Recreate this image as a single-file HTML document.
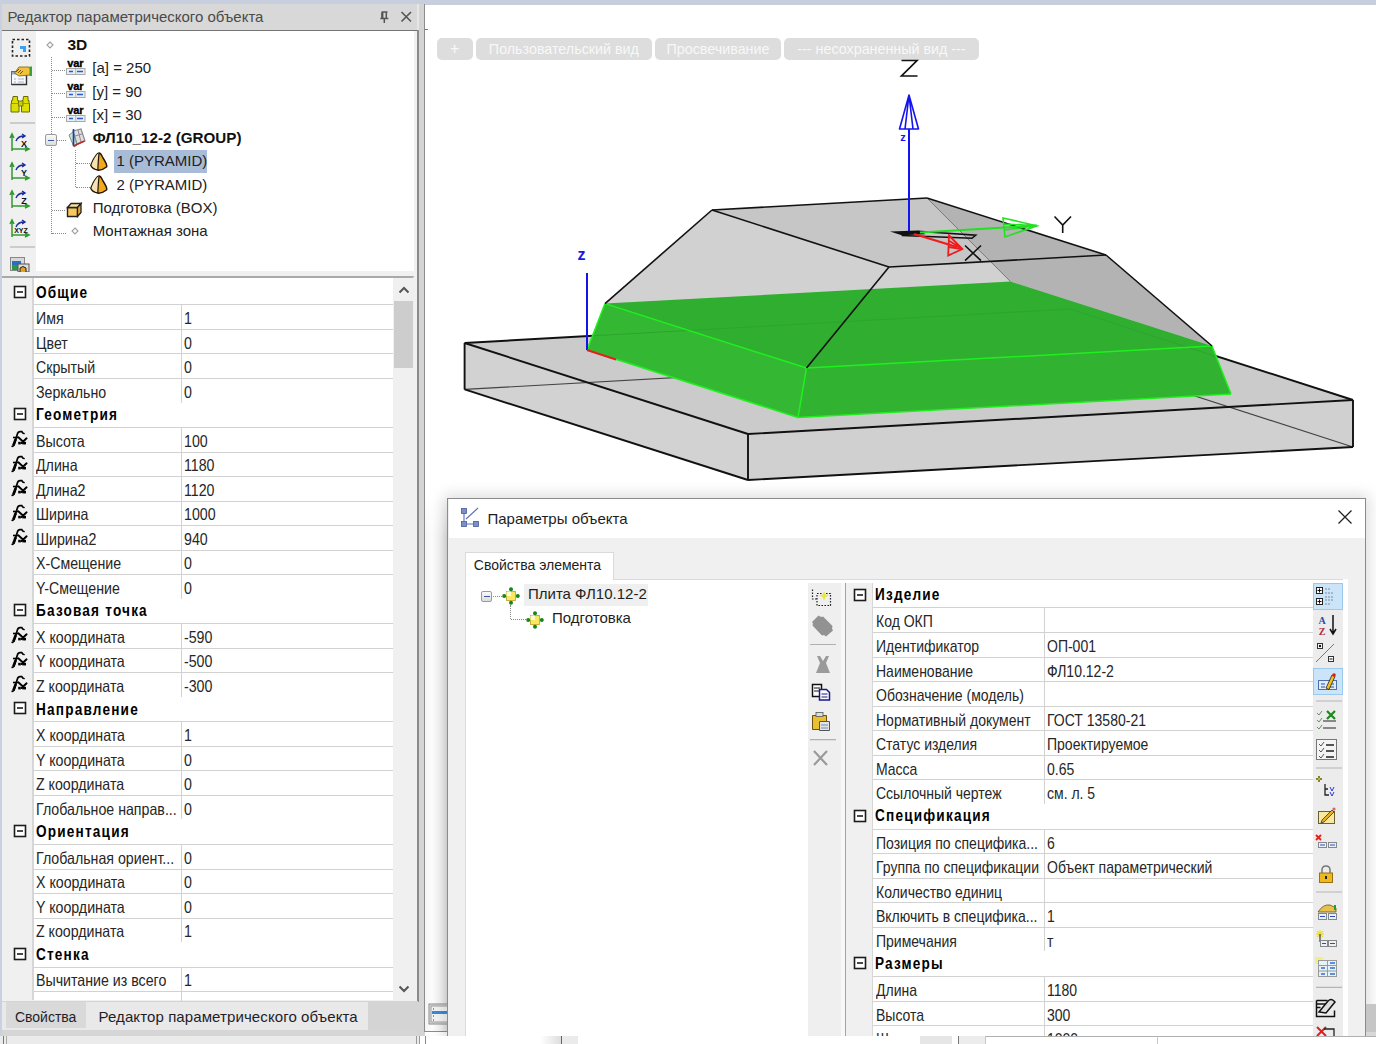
<!DOCTYPE html>
<html><head><meta charset="utf-8"><style>
html,body{margin:0;padding:0;}
body{width:1376px;height:1044px;position:relative;overflow:hidden;background:#ffffff;font-family:"Liberation Sans", sans-serif;}
div{position:absolute;box-sizing:border-box;}
.t{white-space:nowrap;}
svg{position:absolute;}
</style></head><body>

<div style="left:0px;top:0px;width:1376px;height:5px;background:#c7cedd;"></div>
<div style="left:0px;top:0px;width:2px;height:1036px;background:#c9d0df;"></div>
<div style="left:2px;top:4px;width:416px;height:26px;background:#d8d8d8;"></div>
<div class="t" style="left:7.5px;top:8.18px;font-size:15px;line-height:17.25px;font-weight:normal;color:#4a4a4a;">Редактор параметрического объекта</div>
<svg style="left:376px;top:8px" width="44" height="18" viewBox="0 0 44 18">
<path d="M5.5 4h6M6.3 4v6.5M10.3 4v6.5M4.3 10.5h8M8.3 10.5v4.5" stroke="#555" stroke-width="1.5" fill="none"/><path d="M6.3 4.5v6" stroke="#555" stroke-width="2.2"/>
<path d="M25.5 4l9.5 9.5M35 4l-9.5 9.5" stroke="#555" stroke-width="1.6" fill="none"/></svg>
<div style="left:2px;top:30px;width:416px;height:1px;background:#747474;"></div>
<div style="left:417px;top:30px;width:1px;height:972px;background:#8a8a8a;"></div>
<div style="left:2px;top:31px;width:415px;height:1005px;background:#f0f0f0;"></div>
<div style="left:36px;top:31px;width:378px;height:240px;background:#ffffff;"></div>
<div style="left:2px;top:276px;width:412px;height:2px;background:#a9a9a9;border-radius:0 0 3px 0;"></div>
<svg style="left:2px;top:31px" width="34" height="245" viewBox="0 31 34 245">
<rect x="10.5" y="39.5" width="17" height="16.5" fill="none" stroke="#222" stroke-width="1.6" stroke-dasharray="2.5 2"/>
<path d="M18 46h6v6h-3v-3h-3z" fill="#3aa0f0"/>
<rect x="9.5" y="71.5" width="15" height="13" fill="#f6f9fd" stroke="#6a6a6a" stroke-width="1"/>
<path d="M9.5 84.5h15v-10" stroke="#333" stroke-width="1.4" fill="none"/>
<rect x="10" y="72" width="14" height="2.5" fill="#8fa8d8"/>
<path d="M12 79h2M16 79h6M12 82h2M16 82h6" stroke="#a8b4c4" stroke-width="1.2"/>
<path d="M12.5 73l4.5-6h10l2 3-1 5-11 1z" fill="#f2c23c" stroke="#7a5a10" stroke-width="0.8"/>
<path d="M14 72l3-3M16 73l3-3M18 74l3-3" stroke="#5a4a10" stroke-width="0.9"/>
<rect x="27.5" y="66.5" width="2.5" height="9.5" fill="#3aa03a"/>
<path d="M11 96.5h4.5v4h1v3h0.5v8.5h-8v-8.5h0.5v-3h1z" fill="#dce000" stroke="#6a6a00" stroke-width="1"/>
<path d="M21.5 96.5h4.5v4h1v3h0.5v8.5h-8v-8.5h0.5v-3h1z" fill="#dce000" stroke="#6a6a00" stroke-width="1"/>
<path d="M16.5 101h4.5v5h-4.5z" fill="#c8cc00" stroke="#6a6a00" stroke-width="0.8"/>
<path d="M10 103.5h7M20.5 103.5h7" stroke="#8a8a00" stroke-width="0.8"/>
<path d="M8 123h25M8 247h25" stroke="#a8a8a8" stroke-width="1.2"/>
</svg>
<svg style="left:9px;top:132px" width="22" height="21" viewBox="0 0 22 21">
<path d="M3 19V3M1 6l2-4 2 4M3 17h17M16 15l4 2-4 2" stroke="#2f9a2f" stroke-width="1.5" fill="none"/>
<path d="M7 9q2-5 8-5M13 2l3 2-3 2" stroke="#1a2aa0" stroke-width="1.4" fill="none"/>
<text x="15" y="15" font-family="Liberation Sans" font-weight="bold" font-size="9" text-anchor="middle" fill="#111">X</text></svg>
<svg style="left:9px;top:161px" width="22" height="21" viewBox="0 0 22 21">
<path d="M3 19V3M1 6l2-4 2 4M3 17h17M16 15l4 2-4 2" stroke="#2f9a2f" stroke-width="1.5" fill="none"/>
<path d="M7 9q2-5 8-5M13 2l3 2-3 2" stroke="#1a2aa0" stroke-width="1.4" fill="none"/>
<text x="15" y="15" font-family="Liberation Sans" font-weight="bold" font-size="9" text-anchor="middle" fill="#111">Y</text></svg>
<svg style="left:9px;top:189px" width="22" height="21" viewBox="0 0 22 21">
<path d="M3 19V3M1 6l2-4 2 4M3 17h17M16 15l4 2-4 2" stroke="#2f9a2f" stroke-width="1.5" fill="none"/>
<path d="M7 9q2-5 8-5M13 2l3 2-3 2" stroke="#1a2aa0" stroke-width="1.4" fill="none"/>
<text x="15" y="15" font-family="Liberation Sans" font-weight="bold" font-size="9" text-anchor="middle" fill="#111">Z</text></svg>
<svg style="left:9px;top:218px" width="22" height="21" viewBox="0 0 22 21">
<path d="M3 19V3M1 6l2-4 2 4M3 17h17M16 15l4 2-4 2" stroke="#2f9a2f" stroke-width="1.5" fill="none"/>
<path d="M7 9q2-5 8-5M13 2l3 2-3 2" stroke="#1a2aa0" stroke-width="1.4" fill="none"/>
<text x="12" y="15" font-family="Liberation Sans" font-weight="bold" font-size="7" text-anchor="middle" fill="#111">XYZ</text></svg>
<svg style="left:9px;top:256px" width="22" height="16" viewBox="0 0 22 16">
<rect x="1.5" y="1.5" width="14" height="13" fill="#d8d8d8" stroke="#888"/><rect x="3" y="5" width="9" height="8" fill="#2a70c0"/><rect x="3" y="9" width="9" height="5" fill="#2a9a40"/>
<rect x="9" y="8" width="11" height="8" fill="#ddd" stroke="#555"/><path d="M11 16v-4q3-3 6 0v4" fill="#e0a020" stroke="#222"/></svg>
<div style="left:50.5px;top:57px;width:1px;height:177px;border-left:1px dotted #8a8a8a;"></div>
<div style="left:75px;top:150px;width:1px;height:37px;border-left:1px dotted #8a8a8a;"></div>
<div style="left:52px;top:70.1px;width:13px;height:1px;border-top:1px dotted #8a8a8a;"></div>
<div style="left:52px;top:93.4px;width:13px;height:1px;border-top:1px dotted #8a8a8a;"></div>
<div style="left:52px;top:116.7px;width:13px;height:1px;border-top:1px dotted #8a8a8a;"></div>
<div style="left:57px;top:140.0px;width:9px;height:1px;border-top:1px dotted #8a8a8a;"></div>
<div style="left:52px;top:209.9px;width:13px;height:1px;border-top:1px dotted #8a8a8a;"></div>
<div style="left:52px;top:233.2px;width:14px;height:1px;border-top:1px dotted #8a8a8a;"></div>
<div style="left:76px;top:163.3px;width:14px;height:1px;border-top:1px dotted #8a8a8a;"></div>
<div style="left:76px;top:186.6px;width:14px;height:1px;border-top:1px dotted #8a8a8a;"></div>
<svg style="left:44.7px;top:39.5px" width="10" height="10" viewBox="0 0 10 10"><path d="M5 2L8 5L5 8L2 5z" fill="none" stroke="#a0a0a0" stroke-width="1.1"/></svg>
<svg style="left:69.5px;top:225.6px" width="10" height="10" viewBox="0 0 10 10"><path d="M5 2L8 5L5 8L2 5z" fill="none" stroke="#a0a0a0" stroke-width="1.1"/></svg>
<div class="t" style="left:67.4px;top:35.52px;font-size:15.5px;line-height:17.82px;font-weight:bold;color:#111;">3D</div>
<svg style="left:65px;top:59.1px" width="22" height="17" viewBox="0 0 22 17">
<text x="10.3" y="7.8" font-family="Liberation Sans" font-weight="bold" font-size="11" text-anchor="middle" fill="#000" stroke="#000" stroke-width="0.35" letter-spacing="-0.2">var</text>
<rect x="1.5" y="9.5" width="18.5" height="6" fill="#e6eef8" stroke="#a8a8a8" stroke-width="1"/>
<path d="M4 12.5h4M12 12.5h6" stroke="#2a5cc0" stroke-width="1.4"/><path d="M10.7 10v5" stroke="#a8a8a8" stroke-width="0.8"/></svg>
<svg style="left:65px;top:82.4px" width="22" height="17" viewBox="0 0 22 17">
<text x="10.3" y="7.8" font-family="Liberation Sans" font-weight="bold" font-size="11" text-anchor="middle" fill="#000" stroke="#000" stroke-width="0.35" letter-spacing="-0.2">var</text>
<rect x="1.5" y="9.5" width="18.5" height="6" fill="#e6eef8" stroke="#a8a8a8" stroke-width="1"/>
<path d="M4 12.5h4M12 12.5h6" stroke="#2a5cc0" stroke-width="1.4"/><path d="M10.7 10v5" stroke="#a8a8a8" stroke-width="0.8"/></svg>
<svg style="left:65px;top:105.7px" width="22" height="17" viewBox="0 0 22 17">
<text x="10.3" y="7.8" font-family="Liberation Sans" font-weight="bold" font-size="11" text-anchor="middle" fill="#000" stroke="#000" stroke-width="0.35" letter-spacing="-0.2">var</text>
<rect x="1.5" y="9.5" width="18.5" height="6" fill="#e6eef8" stroke="#a8a8a8" stroke-width="1"/>
<path d="M4 12.5h4M12 12.5h6" stroke="#2a5cc0" stroke-width="1.4"/><path d="M10.7 10v5" stroke="#a8a8a8" stroke-width="0.8"/></svg>
<div class="t" style="left:92.3px;top:59.28px;font-size:15px;line-height:17.25px;font-weight:normal;color:#222;">[a] = 250</div>
<div class="t" style="left:92.3px;top:82.58px;font-size:15px;line-height:17.25px;font-weight:normal;color:#222;">[y] = 90</div>
<div class="t" style="left:92.3px;top:105.88px;font-size:15px;line-height:17.25px;font-weight:normal;color:#222;">[x] = 30</div>
<div style="left:45px;top:134px;width:12px;height:12px;border:1px solid #9a9a9a;border-radius:2px;background:linear-gradient(#fafafa,#dcdcdc);"></div>
<div style="left:48px;top:139.5px;width:6px;height:1.5px;background:#3a5aa0;"></div>
<svg style="left:67px;top:128px" width="19" height="20" viewBox="0 0 19 20">
<path d="M6 3l8-2 4 12-8 3z" fill="#e0e0e0" stroke="#8a8a8a" stroke-width="1.2"/><path d="M8 8l7-2M11 2l3 12" stroke="#8a8a8a" stroke-width="1"/>
<path d="M2 7l4-3 4 13-3 2z" fill="#cfe0cf" stroke="#6aa06a" stroke-width="1"/>
<path d="M6.5 1v17" stroke="#2030e0" stroke-width="1.6"/><path d="M6.5 18l11-5" stroke="#c02020" stroke-width="1.6"/></svg>
<div class="t" style="left:92.7px;top:128.99px;font-size:15.2px;line-height:17.48px;font-weight:bold;color:#111;">ФЛ10_12-2 (GROUP)</div>
<svg style="left:90px;top:151.8px" width="18" height="19" viewBox="0 0 18 19">
<path d="M9 1C11 1 12 4 13 6C15 9 17 12 16.8 14.7C14 17 11 18.2 8.5 18.2C5 17.5 1.5 15.5 0.8 13.2C2 10 4 6 6 3.5C7 2 8 1 9 1Z" fill="#f2a81c" stroke="#1e1408" stroke-width="1.4"/>
<path d="M9 1.6C8 1.6 7 2.5 6.2 3.8C4.3 6.3 2.4 10 1.5 13.1C2.3 15.1 5 16.8 7.8 17.4L8.3 9Z" fill="#f8e2b4"/>
<path d="M9 1.5L8.3 9L7.8 18" stroke="#1e1408" stroke-width="1.2" fill="none"/></svg>
<svg style="left:90px;top:175.1px" width="18" height="19" viewBox="0 0 18 19">
<path d="M9 1C11 1 12 4 13 6C15 9 17 12 16.8 14.7C14 17 11 18.2 8.5 18.2C5 17.5 1.5 15.5 0.8 13.2C2 10 4 6 6 3.5C7 2 8 1 9 1Z" fill="#f2a81c" stroke="#1e1408" stroke-width="1.4"/>
<path d="M9 1.6C8 1.6 7 2.5 6.2 3.8C4.3 6.3 2.4 10 1.5 13.1C2.3 15.1 5 16.8 7.8 17.4L8.3 9Z" fill="#f8e2b4"/>
<path d="M9 1.5L8.3 9L7.8 18" stroke="#1e1408" stroke-width="1.2" fill="none"/></svg>
<div style="left:114px;top:150px;width:93px;height:23px;background:#a9bcd7;"></div>
<div class="t" style="left:116.4px;top:152.48px;font-size:15px;line-height:17.25px;font-weight:normal;color:#222;">1 (PYRAMID)</div>
<div class="t" style="left:116.4px;top:175.78px;font-size:15px;line-height:17.25px;font-weight:normal;color:#222;">2 (PYRAMID)</div>
<svg style="left:66px;top:202px" width="17" height="16" viewBox="0 0 17 16">
<path d="M1.5 5.5h10v9h-10z" fill="#f8c860" stroke="#222" stroke-width="1.4"/><path d="M1.5 5.5l3.5-4h10l-3.5 4z" fill="#fbe09a" stroke="#222" stroke-width="1.3"/><path d="M11.5 14.5l3.5-4v-9l-3.5 4z" fill="#e8a830" stroke="#222" stroke-width="1.3"/></svg>
<div class="t" style="left:92.7px;top:199.08px;font-size:15px;line-height:17.25px;font-weight:normal;color:#222;">Подготовка (BOX)</div>
<div class="t" style="left:92.7px;top:222.38px;font-size:15px;line-height:17.25px;font-weight:normal;color:#222;">Монтажная зона</div>
<div style="left:34px;top:278px;width:359px;height:722px;background:#ffffff;"></div>
<div style="left:32px;top:278px;width:1.5px;height:722px;background:#d6d6d6;"></div>
<svg style="left:13px;top:284.5px" width="14" height="14" viewBox="0 0 14 14"><rect x="1.5" y="1.5" width="11" height="11" fill="#fff" stroke="#1c1c1c" stroke-width="1.6"/><path d="M4 7h6" stroke="#1c1c1c" stroke-width="1.6"/></svg>
<div class="t" style="left:35.5px;top:283.56px;font-size:16px;line-height:18.40px;font-weight:bold;color:#000;letter-spacing:1.4px;transform:scaleX(0.85);transform-origin:0 0;">Общие</div>
<div style="left:33.5px;top:304.426px;width:359.5px;height:1px;background:#d2d2d2;"></div>
<div style="left:180.5px;top:305.426px;width:1.3px;height:23.526px;background:#d2d2d2;"></div>
<div class="t" style="left:35.5px;top:309.12px;font-size:16.5px;line-height:18.97px;font-weight:normal;color:#262626;transform:scaleX(0.86);transform-origin:0 0;">Имя</div>
<div class="t" style="left:183.5px;top:309.12px;font-size:16.5px;line-height:18.97px;font-weight:normal;color:#262626;transform:scaleX(0.86);transform-origin:0 0;">1</div>
<div style="left:33.5px;top:328.952px;width:359.5px;height:1px;background:#d2d2d2;"></div>
<div style="left:180.5px;top:329.952px;width:1.3px;height:23.526px;background:#d2d2d2;"></div>
<div class="t" style="left:35.5px;top:333.65px;font-size:16.5px;line-height:18.97px;font-weight:normal;color:#262626;transform:scaleX(0.86);transform-origin:0 0;">Цвет</div>
<div class="t" style="left:183.5px;top:333.65px;font-size:16.5px;line-height:18.97px;font-weight:normal;color:#262626;transform:scaleX(0.86);transform-origin:0 0;">0</div>
<div style="left:33.5px;top:353.47799999999995px;width:359.5px;height:1px;background:#d2d2d2;"></div>
<div style="left:180.5px;top:354.47799999999995px;width:1.3px;height:23.526px;background:#d2d2d2;"></div>
<div class="t" style="left:35.5px;top:358.17px;font-size:16.5px;line-height:18.97px;font-weight:normal;color:#262626;transform:scaleX(0.86);transform-origin:0 0;">Скрытый</div>
<div class="t" style="left:183.5px;top:358.17px;font-size:16.5px;line-height:18.97px;font-weight:normal;color:#262626;transform:scaleX(0.86);transform-origin:0 0;">0</div>
<div style="left:33.5px;top:378.00399999999996px;width:359.5px;height:1px;background:#d2d2d2;"></div>
<div style="left:180.5px;top:379.00399999999996px;width:1.3px;height:23.526px;background:#d2d2d2;"></div>
<div class="t" style="left:35.5px;top:382.70px;font-size:16.5px;line-height:18.97px;font-weight:normal;color:#262626;transform:scaleX(0.86);transform-origin:0 0;">Зеркально</div>
<div class="t" style="left:183.5px;top:382.70px;font-size:16.5px;line-height:18.97px;font-weight:normal;color:#262626;transform:scaleX(0.86);transform-origin:0 0;">0</div>
<svg style="left:13px;top:407.1px" width="14" height="14" viewBox="0 0 14 14"><rect x="1.5" y="1.5" width="11" height="11" fill="#fff" stroke="#1c1c1c" stroke-width="1.6"/><path d="M4 7h6" stroke="#1c1c1c" stroke-width="1.6"/></svg>
<div class="t" style="left:35.5px;top:406.19px;font-size:16px;line-height:18.40px;font-weight:bold;color:#000;letter-spacing:1.4px;transform:scaleX(0.85);transform-origin:0 0;">Геометрия</div>
<div style="left:33.5px;top:427.056px;width:359.5px;height:1px;background:#d2d2d2;"></div>
<div style="left:180.5px;top:428.056px;width:1.3px;height:23.526px;background:#d2d2d2;"></div>
<div class="t" style="left:35.5px;top:431.75px;font-size:16.5px;line-height:18.97px;font-weight:normal;color:#262626;transform:scaleX(0.86);transform-origin:0 0;">Высота</div>
<div class="t" style="left:183.5px;top:431.75px;font-size:16.5px;line-height:18.97px;font-weight:normal;color:#262626;transform:scaleX(0.86);transform-origin:0 0;">100</div>
<svg style="left:6px;top:426.0px" width="28" height="24" viewBox="0 0 28 24">
<path d="M6.2 20.4Q8.3 20 8.8 16.5L11.3 8.2Q12 5.7 14 5.7L15.8 5.7Q16.8 7.6 18 7.5" fill="none" stroke="#000" stroke-width="1.7" stroke-linecap="round"/>
<path d="M7.3 19.5L9.8 13" stroke="#000" stroke-width="2.6"/>
<path d="M7 11.5H12" stroke="#000" stroke-width="1.6"/>
<path d="M12.3 11.3L18.8 17.2M20.6 12.3L15.6 17" stroke="#000" stroke-width="1.9" stroke-linecap="round"/>
<rect x="12.2" y="15.8" width="2.6" height="2.6" fill="#000"/><rect x="16.2" y="15.8" width="3.8" height="2.6" fill="#000"/></svg>
<div style="left:33.5px;top:451.582px;width:359.5px;height:1px;background:#d2d2d2;"></div>
<div style="left:180.5px;top:452.582px;width:1.3px;height:23.526px;background:#d2d2d2;"></div>
<div class="t" style="left:35.5px;top:456.28px;font-size:16.5px;line-height:18.97px;font-weight:normal;color:#262626;transform:scaleX(0.86);transform-origin:0 0;">Длина</div>
<div class="t" style="left:183.5px;top:456.28px;font-size:16.5px;line-height:18.97px;font-weight:normal;color:#262626;transform:scaleX(0.86);transform-origin:0 0;">1180</div>
<svg style="left:6px;top:450.5px" width="28" height="24" viewBox="0 0 28 24">
<path d="M6.2 20.4Q8.3 20 8.8 16.5L11.3 8.2Q12 5.7 14 5.7L15.8 5.7Q16.8 7.6 18 7.5" fill="none" stroke="#000" stroke-width="1.7" stroke-linecap="round"/>
<path d="M7.3 19.5L9.8 13" stroke="#000" stroke-width="2.6"/>
<path d="M7 11.5H12" stroke="#000" stroke-width="1.6"/>
<path d="M12.3 11.3L18.8 17.2M20.6 12.3L15.6 17" stroke="#000" stroke-width="1.9" stroke-linecap="round"/>
<rect x="12.2" y="15.8" width="2.6" height="2.6" fill="#000"/><rect x="16.2" y="15.8" width="3.8" height="2.6" fill="#000"/></svg>
<div style="left:33.5px;top:476.10799999999995px;width:359.5px;height:1px;background:#d2d2d2;"></div>
<div style="left:180.5px;top:477.10799999999995px;width:1.3px;height:23.526px;background:#d2d2d2;"></div>
<div class="t" style="left:35.5px;top:480.80px;font-size:16.5px;line-height:18.97px;font-weight:normal;color:#262626;transform:scaleX(0.86);transform-origin:0 0;">Длина2</div>
<div class="t" style="left:183.5px;top:480.80px;font-size:16.5px;line-height:18.97px;font-weight:normal;color:#262626;transform:scaleX(0.86);transform-origin:0 0;">1120</div>
<svg style="left:6px;top:475.0px" width="28" height="24" viewBox="0 0 28 24">
<path d="M6.2 20.4Q8.3 20 8.8 16.5L11.3 8.2Q12 5.7 14 5.7L15.8 5.7Q16.8 7.6 18 7.5" fill="none" stroke="#000" stroke-width="1.7" stroke-linecap="round"/>
<path d="M7.3 19.5L9.8 13" stroke="#000" stroke-width="2.6"/>
<path d="M7 11.5H12" stroke="#000" stroke-width="1.6"/>
<path d="M12.3 11.3L18.8 17.2M20.6 12.3L15.6 17" stroke="#000" stroke-width="1.9" stroke-linecap="round"/>
<rect x="12.2" y="15.8" width="2.6" height="2.6" fill="#000"/><rect x="16.2" y="15.8" width="3.8" height="2.6" fill="#000"/></svg>
<div style="left:33.5px;top:500.634px;width:359.5px;height:1px;background:#d2d2d2;"></div>
<div style="left:180.5px;top:501.634px;width:1.3px;height:23.526px;background:#d2d2d2;"></div>
<div class="t" style="left:35.5px;top:505.33px;font-size:16.5px;line-height:18.97px;font-weight:normal;color:#262626;transform:scaleX(0.86);transform-origin:0 0;">Ширина</div>
<div class="t" style="left:183.5px;top:505.33px;font-size:16.5px;line-height:18.97px;font-weight:normal;color:#262626;transform:scaleX(0.86);transform-origin:0 0;">1000</div>
<svg style="left:6px;top:499.5px" width="28" height="24" viewBox="0 0 28 24">
<path d="M6.2 20.4Q8.3 20 8.8 16.5L11.3 8.2Q12 5.7 14 5.7L15.8 5.7Q16.8 7.6 18 7.5" fill="none" stroke="#000" stroke-width="1.7" stroke-linecap="round"/>
<path d="M7.3 19.5L9.8 13" stroke="#000" stroke-width="2.6"/>
<path d="M7 11.5H12" stroke="#000" stroke-width="1.6"/>
<path d="M12.3 11.3L18.8 17.2M20.6 12.3L15.6 17" stroke="#000" stroke-width="1.9" stroke-linecap="round"/>
<rect x="12.2" y="15.8" width="2.6" height="2.6" fill="#000"/><rect x="16.2" y="15.8" width="3.8" height="2.6" fill="#000"/></svg>
<div style="left:33.5px;top:525.16px;width:359.5px;height:1px;background:#d2d2d2;"></div>
<div style="left:180.5px;top:526.16px;width:1.3px;height:23.526px;background:#d2d2d2;"></div>
<div class="t" style="left:35.5px;top:529.86px;font-size:16.5px;line-height:18.97px;font-weight:normal;color:#262626;transform:scaleX(0.86);transform-origin:0 0;">Ширина2</div>
<div class="t" style="left:183.5px;top:529.86px;font-size:16.5px;line-height:18.97px;font-weight:normal;color:#262626;transform:scaleX(0.86);transform-origin:0 0;">940</div>
<svg style="left:6px;top:524.1px" width="28" height="24" viewBox="0 0 28 24">
<path d="M6.2 20.4Q8.3 20 8.8 16.5L11.3 8.2Q12 5.7 14 5.7L15.8 5.7Q16.8 7.6 18 7.5" fill="none" stroke="#000" stroke-width="1.7" stroke-linecap="round"/>
<path d="M7.3 19.5L9.8 13" stroke="#000" stroke-width="2.6"/>
<path d="M7 11.5H12" stroke="#000" stroke-width="1.6"/>
<path d="M12.3 11.3L18.8 17.2M20.6 12.3L15.6 17" stroke="#000" stroke-width="1.9" stroke-linecap="round"/>
<rect x="12.2" y="15.8" width="2.6" height="2.6" fill="#000"/><rect x="16.2" y="15.8" width="3.8" height="2.6" fill="#000"/></svg>
<div style="left:33.5px;top:549.6859999999999px;width:359.5px;height:1px;background:#d2d2d2;"></div>
<div style="left:180.5px;top:550.6859999999999px;width:1.3px;height:23.526px;background:#d2d2d2;"></div>
<div class="t" style="left:35.5px;top:554.38px;font-size:16.5px;line-height:18.97px;font-weight:normal;color:#262626;transform:scaleX(0.86);transform-origin:0 0;">X-Смещение</div>
<div class="t" style="left:183.5px;top:554.38px;font-size:16.5px;line-height:18.97px;font-weight:normal;color:#262626;transform:scaleX(0.86);transform-origin:0 0;">0</div>
<div style="left:33.5px;top:574.212px;width:359.5px;height:1px;background:#d2d2d2;"></div>
<div style="left:180.5px;top:575.212px;width:1.3px;height:23.526px;background:#d2d2d2;"></div>
<div class="t" style="left:35.5px;top:578.91px;font-size:16.5px;line-height:18.97px;font-weight:normal;color:#262626;transform:scaleX(0.86);transform-origin:0 0;">Y-Смещение</div>
<div class="t" style="left:183.5px;top:578.91px;font-size:16.5px;line-height:18.97px;font-weight:normal;color:#262626;transform:scaleX(0.86);transform-origin:0 0;">0</div>
<svg style="left:13px;top:603.3px" width="14" height="14" viewBox="0 0 14 14"><rect x="1.5" y="1.5" width="11" height="11" fill="#fff" stroke="#1c1c1c" stroke-width="1.6"/><path d="M4 7h6" stroke="#1c1c1c" stroke-width="1.6"/></svg>
<div class="t" style="left:35.5px;top:602.39px;font-size:16px;line-height:18.40px;font-weight:bold;color:#000;letter-spacing:1.4px;transform:scaleX(0.85);transform-origin:0 0;">Базовая точка</div>
<div style="left:33.5px;top:623.2639999999999px;width:359.5px;height:1px;background:#d2d2d2;"></div>
<div style="left:180.5px;top:624.2639999999999px;width:1.3px;height:23.526px;background:#d2d2d2;"></div>
<div class="t" style="left:35.5px;top:627.96px;font-size:16.5px;line-height:18.97px;font-weight:normal;color:#262626;transform:scaleX(0.86);transform-origin:0 0;">X координата</div>
<div class="t" style="left:183.5px;top:627.96px;font-size:16.5px;line-height:18.97px;font-weight:normal;color:#262626;transform:scaleX(0.86);transform-origin:0 0;">-590</div>
<svg style="left:6px;top:622.2px" width="28" height="24" viewBox="0 0 28 24">
<path d="M6.2 20.4Q8.3 20 8.8 16.5L11.3 8.2Q12 5.7 14 5.7L15.8 5.7Q16.8 7.6 18 7.5" fill="none" stroke="#000" stroke-width="1.7" stroke-linecap="round"/>
<path d="M7.3 19.5L9.8 13" stroke="#000" stroke-width="2.6"/>
<path d="M7 11.5H12" stroke="#000" stroke-width="1.6"/>
<path d="M12.3 11.3L18.8 17.2M20.6 12.3L15.6 17" stroke="#000" stroke-width="1.9" stroke-linecap="round"/>
<rect x="12.2" y="15.8" width="2.6" height="2.6" fill="#000"/><rect x="16.2" y="15.8" width="3.8" height="2.6" fill="#000"/></svg>
<div style="left:33.5px;top:647.79px;width:359.5px;height:1px;background:#d2d2d2;"></div>
<div style="left:180.5px;top:648.79px;width:1.3px;height:23.526px;background:#d2d2d2;"></div>
<div class="t" style="left:35.5px;top:652.49px;font-size:16.5px;line-height:18.97px;font-weight:normal;color:#262626;transform:scaleX(0.86);transform-origin:0 0;">Y координата</div>
<div class="t" style="left:183.5px;top:652.49px;font-size:16.5px;line-height:18.97px;font-weight:normal;color:#262626;transform:scaleX(0.86);transform-origin:0 0;">-500</div>
<svg style="left:6px;top:646.7px" width="28" height="24" viewBox="0 0 28 24">
<path d="M6.2 20.4Q8.3 20 8.8 16.5L11.3 8.2Q12 5.7 14 5.7L15.8 5.7Q16.8 7.6 18 7.5" fill="none" stroke="#000" stroke-width="1.7" stroke-linecap="round"/>
<path d="M7.3 19.5L9.8 13" stroke="#000" stroke-width="2.6"/>
<path d="M7 11.5H12" stroke="#000" stroke-width="1.6"/>
<path d="M12.3 11.3L18.8 17.2M20.6 12.3L15.6 17" stroke="#000" stroke-width="1.9" stroke-linecap="round"/>
<rect x="12.2" y="15.8" width="2.6" height="2.6" fill="#000"/><rect x="16.2" y="15.8" width="3.8" height="2.6" fill="#000"/></svg>
<div style="left:33.5px;top:672.316px;width:359.5px;height:1px;background:#d2d2d2;"></div>
<div style="left:180.5px;top:673.316px;width:1.3px;height:23.526px;background:#d2d2d2;"></div>
<div class="t" style="left:35.5px;top:677.01px;font-size:16.5px;line-height:18.97px;font-weight:normal;color:#262626;transform:scaleX(0.86);transform-origin:0 0;">Z координата</div>
<div class="t" style="left:183.5px;top:677.01px;font-size:16.5px;line-height:18.97px;font-weight:normal;color:#262626;transform:scaleX(0.86);transform-origin:0 0;">-300</div>
<svg style="left:6px;top:671.2px" width="28" height="24" viewBox="0 0 28 24">
<path d="M6.2 20.4Q8.3 20 8.8 16.5L11.3 8.2Q12 5.7 14 5.7L15.8 5.7Q16.8 7.6 18 7.5" fill="none" stroke="#000" stroke-width="1.7" stroke-linecap="round"/>
<path d="M7.3 19.5L9.8 13" stroke="#000" stroke-width="2.6"/>
<path d="M7 11.5H12" stroke="#000" stroke-width="1.6"/>
<path d="M12.3 11.3L18.8 17.2M20.6 12.3L15.6 17" stroke="#000" stroke-width="1.9" stroke-linecap="round"/>
<rect x="12.2" y="15.8" width="2.6" height="2.6" fill="#000"/><rect x="16.2" y="15.8" width="3.8" height="2.6" fill="#000"/></svg>
<svg style="left:13px;top:701.4px" width="14" height="14" viewBox="0 0 14 14"><rect x="1.5" y="1.5" width="11" height="11" fill="#fff" stroke="#1c1c1c" stroke-width="1.6"/><path d="M4 7h6" stroke="#1c1c1c" stroke-width="1.6"/></svg>
<div class="t" style="left:35.5px;top:700.50px;font-size:16px;line-height:18.40px;font-weight:bold;color:#000;letter-spacing:1.4px;transform:scaleX(0.85);transform-origin:0 0;">Направление</div>
<div style="left:33.5px;top:721.3679999999999px;width:359.5px;height:1px;background:#d2d2d2;"></div>
<div style="left:180.5px;top:722.3679999999999px;width:1.3px;height:23.526px;background:#d2d2d2;"></div>
<div class="t" style="left:35.5px;top:726.06px;font-size:16.5px;line-height:18.97px;font-weight:normal;color:#262626;transform:scaleX(0.86);transform-origin:0 0;">X координата</div>
<div class="t" style="left:183.5px;top:726.06px;font-size:16.5px;line-height:18.97px;font-weight:normal;color:#262626;transform:scaleX(0.86);transform-origin:0 0;">1</div>
<div style="left:33.5px;top:745.894px;width:359.5px;height:1px;background:#d2d2d2;"></div>
<div style="left:180.5px;top:746.894px;width:1.3px;height:23.526px;background:#d2d2d2;"></div>
<div class="t" style="left:35.5px;top:750.59px;font-size:16.5px;line-height:18.97px;font-weight:normal;color:#262626;transform:scaleX(0.86);transform-origin:0 0;">Y координата</div>
<div class="t" style="left:183.5px;top:750.59px;font-size:16.5px;line-height:18.97px;font-weight:normal;color:#262626;transform:scaleX(0.86);transform-origin:0 0;">0</div>
<div style="left:33.5px;top:770.42px;width:359.5px;height:1px;background:#d2d2d2;"></div>
<div style="left:180.5px;top:771.42px;width:1.3px;height:23.526px;background:#d2d2d2;"></div>
<div class="t" style="left:35.5px;top:775.12px;font-size:16.5px;line-height:18.97px;font-weight:normal;color:#262626;transform:scaleX(0.86);transform-origin:0 0;">Z координата</div>
<div class="t" style="left:183.5px;top:775.12px;font-size:16.5px;line-height:18.97px;font-weight:normal;color:#262626;transform:scaleX(0.86);transform-origin:0 0;">0</div>
<div style="left:33.5px;top:794.946px;width:359.5px;height:1px;background:#d2d2d2;"></div>
<div style="left:180.5px;top:795.946px;width:1.3px;height:23.526px;background:#d2d2d2;"></div>
<div class="t" style="left:35.5px;top:799.64px;font-size:16.5px;line-height:18.97px;font-weight:normal;color:#262626;transform:scaleX(0.86);transform-origin:0 0;">Глобальное направ...</div>
<div class="t" style="left:183.5px;top:799.64px;font-size:16.5px;line-height:18.97px;font-weight:normal;color:#262626;transform:scaleX(0.86);transform-origin:0 0;">0</div>
<svg style="left:13px;top:824.1px" width="14" height="14" viewBox="0 0 14 14"><rect x="1.5" y="1.5" width="11" height="11" fill="#fff" stroke="#1c1c1c" stroke-width="1.6"/><path d="M4 7h6" stroke="#1c1c1c" stroke-width="1.6"/></svg>
<div class="t" style="left:35.5px;top:823.13px;font-size:16px;line-height:18.40px;font-weight:bold;color:#000;letter-spacing:1.4px;transform:scaleX(0.85);transform-origin:0 0;">Ориентация</div>
<div style="left:33.5px;top:843.9979999999999px;width:359.5px;height:1px;background:#d2d2d2;"></div>
<div style="left:180.5px;top:844.9979999999999px;width:1.3px;height:23.526px;background:#d2d2d2;"></div>
<div class="t" style="left:35.5px;top:848.69px;font-size:16.5px;line-height:18.97px;font-weight:normal;color:#262626;transform:scaleX(0.86);transform-origin:0 0;">Глобальная ориент...</div>
<div class="t" style="left:183.5px;top:848.69px;font-size:16.5px;line-height:18.97px;font-weight:normal;color:#262626;transform:scaleX(0.86);transform-origin:0 0;">0</div>
<div style="left:33.5px;top:868.524px;width:359.5px;height:1px;background:#d2d2d2;"></div>
<div style="left:180.5px;top:869.524px;width:1.3px;height:23.526px;background:#d2d2d2;"></div>
<div class="t" style="left:35.5px;top:873.22px;font-size:16.5px;line-height:18.97px;font-weight:normal;color:#262626;transform:scaleX(0.86);transform-origin:0 0;">X координата</div>
<div class="t" style="left:183.5px;top:873.22px;font-size:16.5px;line-height:18.97px;font-weight:normal;color:#262626;transform:scaleX(0.86);transform-origin:0 0;">0</div>
<div style="left:33.5px;top:893.05px;width:359.5px;height:1px;background:#d2d2d2;"></div>
<div style="left:180.5px;top:894.05px;width:1.3px;height:23.526px;background:#d2d2d2;"></div>
<div class="t" style="left:35.5px;top:897.75px;font-size:16.5px;line-height:18.97px;font-weight:normal;color:#262626;transform:scaleX(0.86);transform-origin:0 0;">Y координата</div>
<div class="t" style="left:183.5px;top:897.75px;font-size:16.5px;line-height:18.97px;font-weight:normal;color:#262626;transform:scaleX(0.86);transform-origin:0 0;">0</div>
<div style="left:33.5px;top:917.576px;width:359.5px;height:1px;background:#d2d2d2;"></div>
<div style="left:180.5px;top:918.576px;width:1.3px;height:23.526px;background:#d2d2d2;"></div>
<div class="t" style="left:35.5px;top:922.27px;font-size:16.5px;line-height:18.97px;font-weight:normal;color:#262626;transform:scaleX(0.86);transform-origin:0 0;">Z координата</div>
<div class="t" style="left:183.5px;top:922.27px;font-size:16.5px;line-height:18.97px;font-weight:normal;color:#262626;transform:scaleX(0.86);transform-origin:0 0;">1</div>
<svg style="left:13px;top:946.7px" width="14" height="14" viewBox="0 0 14 14"><rect x="1.5" y="1.5" width="11" height="11" fill="#fff" stroke="#1c1c1c" stroke-width="1.6"/><path d="M4 7h6" stroke="#1c1c1c" stroke-width="1.6"/></svg>
<div class="t" style="left:35.5px;top:945.76px;font-size:16px;line-height:18.40px;font-weight:bold;color:#000;letter-spacing:1.4px;transform:scaleX(0.85);transform-origin:0 0;">Стенка</div>
<div style="left:33.5px;top:966.6279999999999px;width:359.5px;height:1px;background:#d2d2d2;"></div>
<div style="left:180.5px;top:967.6279999999999px;width:1.3px;height:23.526px;background:#d2d2d2;"></div>
<div class="t" style="left:35.5px;top:971.32px;font-size:16.5px;line-height:18.97px;font-weight:normal;color:#262626;transform:scaleX(0.86);transform-origin:0 0;">Вычитание из всего</div>
<div class="t" style="left:183.5px;top:971.32px;font-size:16.5px;line-height:18.97px;font-weight:normal;color:#262626;transform:scaleX(0.86);transform-origin:0 0;">1</div>
<div style="left:33.5px;top:991.154px;width:359.5px;height:1px;background:#d2d2d2;"></div>
<div style="left:180.5px;top:992.154px;width:1.3px;height:23.526px;background:#d2d2d2;"></div>
<div style="left:394px;top:278px;width:19px;height:722px;background:#f0f0f0;"></div>
<div style="left:394px;top:301px;width:19px;height:67px;background:#cdcdcd;"></div>
<svg style="left:397px;top:283px" width="14" height="14" viewBox="0 0 14 14"><path d="M2.5 9.5L7 5l4.5 4.5" stroke="#555" stroke-width="2" fill="none"/></svg>
<svg style="left:397px;top:982px" width="14" height="14" viewBox="0 0 14 14"><path d="M2.5 4.5L7 9l4.5-4.5" stroke="#555" stroke-width="2" fill="none"/></svg>
<div style="left:2px;top:1000.5px;width:421px;height:30.5px;background:#d4d4d4;"></div>
<div style="left:86.5px;top:1001.5px;width:281.5px;height:28.5px;background:#e9e9e9;"></div>
<div style="left:2px;top:1001.5px;width:84.5px;height:28.5px;background:#e9e9e9;"></div>
<div style="left:5.8px;top:1001.5px;width:80.7px;height:26.2px;background:#d9d9d9;"></div>
<div class="t" style="left:14.9px;top:1009.00px;font-size:14px;line-height:16.10px;font-weight:normal;color:#1e1e2a;">Свойства</div>
<div class="t" style="left:98.5px;top:1008.18px;font-size:15px;line-height:17.25px;font-weight:normal;color:#1e1e2a;letter-spacing:0.1px;">Редактор параметрического объекта</div>
<div style="left:2px;top:1030px;width:421px;height:6px;background:#d6d6d6;"></div>
<div style="left:0px;top:1036px;width:1376px;height:8px;background:#ffffff;"></div>
<div style="left:3px;top:1036px;width:1.5px;height:8px;background:#777;"></div>
<div style="left:418px;top:4px;width:7px;height:1032px;background:#d4d4d4;"></div>
<div style="left:416.5px;top:4px;width:2px;height:26px;background:#e6e6e6;"></div>
<div style="left:417.5px;top:30px;width:1.3px;height:972px;background:#8c8c8c;"></div>
<div style="left:424px;top:4px;width:1.3px;height:1028px;background:#8c8c8c;"></div>
<div style="left:425px;top:5px;width:951px;height:1031px;background:#ffffff;"></div>
<div style="left:425px;top:28.5px;width:3px;height:1.3px;background:#777;"></div>
<div style="left:437px;top:38px;width:35.5px;height:22px;background:#dddddd;border-radius:5px;"></div>
<div class="t" style="left:437px;top:38px;width:35.5px;height:22px;line-height:22px;text-align:center;font-size:16px;color:#f8f8f8;">+</div>
<div style="left:475.8px;top:38px;width:176.2px;height:22px;background:#dddddd;border-radius:5px;"></div>
<div class="t" style="left:475.8px;top:38px;width:176.2px;height:22px;line-height:22px;text-align:center;font-size:14.3px;color:#f8f8f8;">Пользовательский вид</div>
<div style="left:655px;top:38px;width:126px;height:22px;background:#dddddd;border-radius:5px;"></div>
<div class="t" style="left:655px;top:38px;width:126px;height:22px;line-height:22px;text-align:center;font-size:14.3px;color:#f8f8f8;">Просвечивание</div>
<div style="left:784px;top:38px;width:195px;height:22px;background:#dddddd;border-radius:5px;"></div>
<div class="t" style="left:784px;top:38px;width:195px;height:22px;line-height:22px;text-align:center;font-size:14.3px;color:#f8f8f8;">--- несохраненный вид ---</div>
<svg style="left:425px;top:5px" width="951" height="1031" viewBox="425 5 951 1031">
<polygon points="464.6,343 1069.6,309 1353,400 748,434" fill="#cbcbcb"/>
<polygon points="464.6,343 748,434 748,480 464.6,389.4" fill="#d2d2d2"/>
<polygon points="748,434 1353,400 1353,447 748,480" fill="#d0d0d0"/>
<line x1="464.6" y1="389.4" x2="1069.6" y2="355.5" stroke="#444" stroke-width="1.1"/>
<line x1="1069.6" y1="355.5" x2="1353" y2="447" stroke="#444" stroke-width="1.1"/>
<line x1="464.6" y1="343" x2="1069.6" y2="309" stroke="#111" stroke-width="1.9"/>
<line x1="1069.6" y1="309" x2="1353" y2="400" stroke="#111" stroke-width="1.9"/>
<line x1="464.6" y1="343" x2="748" y2="434" stroke="#111" stroke-width="1.9"/>
<line x1="748" y1="434" x2="1353" y2="400" stroke="#111" stroke-width="1.9"/>
<line x1="464.6" y1="343" x2="464.6" y2="389.4" stroke="#111" stroke-width="1.9"/>
<line x1="748" y1="434" x2="748" y2="480" stroke="#111" stroke-width="1.9"/>
<line x1="1353" y1="400" x2="1353" y2="447" stroke="#111" stroke-width="1.9"/>
<line x1="464.6" y1="389.4" x2="748" y2="480" stroke="#111" stroke-width="1.9"/>
<line x1="748" y1="480" x2="1353" y2="447" stroke="#111" stroke-width="1.9"/>
<polygon points="712,210 889,267 806.5,368 605,303.6" fill="#d1d1d1"/>
<polygon points="889,267 1106,255 1212,346 806.5,368" fill="#d1d1d1"/>
<polygon points="712,210 927,198 1106,255 889,267" fill="#c6c6c6"/>
<polygon points="927,198 1106,255 1212,346 1010.5,281.6" fill="#b3b3b3"/>
<line x1="927" y1="198" x2="1010.5" y2="281.6" stroke="#7a7a7a" stroke-width="1"/>
<polygon points="605,303.6 1010.5,281.6 1212,346 806.5,368" fill="#30ae30"/>
<polygon points="605,303.6 806.5,368 798,417.5 587,350" fill="#34b834"/>
<polygon points="806.5,368 1212,346 1231,394 798,417.5" fill="#31b231"/>
<line x1="593" y1="335.8" x2="1069.6" y2="309" stroke="#2ca52c" stroke-width="1"/>
<line x1="1069.6" y1="309" x2="1217" y2="356.8" stroke="#2ca52c" stroke-width="1"/>
<line x1="605" y1="303.6" x2="806.5" y2="368" stroke="#1ef01e" stroke-width="1.5"/>
<line x1="806.5" y1="368" x2="1212" y2="346" stroke="#1ef01e" stroke-width="1.5"/>
<line x1="587" y1="350" x2="798" y2="417.5" stroke="#1ef01e" stroke-width="1.5"/>
<line x1="798" y1="417.5" x2="1231" y2="394" stroke="#1ef01e" stroke-width="1.5"/>
<line x1="605" y1="303.6" x2="587" y2="350" stroke="#1ef01e" stroke-width="1.5"/>
<line x1="806.5" y1="368" x2="798" y2="417.5" stroke="#1ef01e" stroke-width="1.5"/>
<line x1="1212" y1="346" x2="1231" y2="394" stroke="#1ef01e" stroke-width="1.5"/>
<line x1="712" y1="210" x2="927" y2="198" stroke="#111" stroke-width="1.6"/>
<line x1="927" y1="198" x2="1106" y2="255" stroke="#111" stroke-width="1.6"/>
<line x1="1106" y1="255" x2="889" y2="267" stroke="#111" stroke-width="1.6"/>
<line x1="889" y1="267" x2="712" y2="210" stroke="#111" stroke-width="1.6"/>
<line x1="712" y1="210" x2="605" y2="303.6" stroke="#111" stroke-width="1.6"/>
<line x1="889" y1="267" x2="806.5" y2="368" stroke="#111" stroke-width="1.6"/>
<line x1="1106" y1="255" x2="1212" y2="346" stroke="#111" stroke-width="1.6"/>
<line x1="587" y1="273" x2="587" y2="350" stroke="#1414e6" stroke-width="2"/>
<line x1="587" y1="350" x2="616" y2="359.5" stroke="#e02020" stroke-width="2"/>
<text x="581.5" y="259.5" font-family="Liberation Sans" font-weight="bold" font-size="16" text-anchor="middle" fill="#1a1ae0">z</text>
<line x1="909" y1="129" x2="909" y2="231" stroke="#1414f0" stroke-width="2"/>
<path d="M909 95L899.5 129H918.5zM909 95L905 129M909 95L913 129" fill="none" stroke="#1414f0" stroke-width="1.6" stroke-linejoin="round"/>
<text x="903" y="141" font-family="Liberation Sans" font-weight="bold" font-size="11" text-anchor="middle" fill="#1414f0">z</text>
<path d="M901.5 60.5H917L901.5 76H917.5" fill="none" stroke="#111" stroke-width="1.7"/>
<path d="M890 231.6L917.7 230.5L925.7 234.2L901.7 235.3z" fill="#111"/>
<path d="M917.7 231.3L975.8 235.2L972 238.3L901.7 235.6" fill="none" stroke="#111" stroke-width="1.5"/>
<line x1="920" y1="232.5" x2="1037" y2="225.5" stroke="#22e022" stroke-width="2"/>
<path d="M1003 218L1037 225.8L1005 237zM1037 225.8L1004 224M1037 225.8L1004.5 230" fill="none" stroke="#22e022" stroke-width="1.6"/>
<path d="M1054.5 216.5L1062.7 225L1071 216.5M1062.7 225V233" fill="none" stroke="#111" stroke-width="1.6"/>
<line x1="914" y1="234" x2="957" y2="247" stroke="#ee1c1c" stroke-width="2.2"/>
<path d="M949 235.5L962.4 249L948.2 255.5zM962.4 249L949.5 241M962.4 249L948.5 247" fill="none" stroke="#ee1c1c" stroke-width="1.8"/>
<path d="M965 245.5L981 260.7M981 245.5L965 260.7" fill="none" stroke="#111" stroke-width="1.6"/>
</svg>
<div style="left:425px;top:498px;width:24px;height:533px;background:linear-gradient(180deg,#ffffff 0px,rgba(255,255,255,0) 40px),linear-gradient(90deg,#f4f4f4 0%,#fdfdfd 30%,#f2f2f2 70%,#dadada 100%);"></div>
<div style="left:424px;top:1030.5px;width:25px;height:1.3px;background:#8c8c8c;"></div>
<svg style="left:428px;top:1003px" width="21" height="22" viewBox="0 0 21 22">
<rect x="1" y="1" width="20" height="20" fill="#e4e4e4" stroke="#8a8a8a"/><rect x="3" y="3" width="18" height="16" fill="#f4f4f4" stroke="#9a9a9a"/>
<rect x="4" y="8" width="17" height="3" fill="#3b8ad8"/><path d="M5 6h1M5 13h1M5 17h1" stroke="#333"/></svg>
<div style="left:420px;top:1036px;width:956px;height:8px;background:#fff;"></div>
<div style="left:447.2px;top:497.5px;width:918.8px;height:558px;background:#f0f0f0;border:1.6px solid #8c8c8c;border-bottom:none;box-shadow:0 0 14px 3px rgba(0,0,0,0.14);"></div>
<div style="left:448.5px;top:499px;width:916.5px;height:38.5px;background:#ffffff;"></div>
<svg style="left:460px;top:507px" width="21" height="21" viewBox="0 0 21 21">
<rect x="1.5" y="1.5" width="5" height="5" fill="#7a90c8" stroke="#4a5a98" stroke-width="0.8"/><rect x="1.5" y="14.5" width="5" height="5" fill="#7a90c8" stroke="#4a5a98" stroke-width="0.8"/><rect x="13.5" y="14.5" width="5" height="5" fill="#7a90c8" stroke="#4a5a98" stroke-width="0.8"/>
<path d="M4 6.5v8M6.5 17h7M6 12l12-11" stroke="#5a70b0" stroke-width="1.1" fill="none"/></svg>
<div class="t" style="left:487.5px;top:509.78px;font-size:15px;line-height:17.25px;font-weight:normal;color:#1e1e1e;">Параметры объекта</div>
<svg style="left:1337px;top:509px" width="16" height="16" viewBox="0 0 16 16"><path d="M1.5 1.5l13 13M14.5 1.5l-13 13" stroke="#222" stroke-width="1.3"/></svg>
<div style="left:464.5px;top:578.5px;width:884px;height:458px;background:#fff;border:1px solid #dadada;border-bottom:none;"></div>
<div style="left:464.5px;top:552px;width:149px;height:27.5px;background:#fff;border:1px solid #dadada;border-bottom:none;"></div>
<div class="t" style="left:473.8px;top:556.50px;font-size:14px;line-height:16.10px;font-weight:normal;color:#1e1e1e;">Свойства элемента</div>
<div style="left:481px;top:591px;width:11px;height:11px;border:1px solid #9a9a9a;border-radius:2px;background:linear-gradient(#fafafa,#dcdcdc);"></div>
<div style="left:483.5px;top:596px;width:6px;height:1.4px;background:#3a5aa0;"></div>
<div style="left:493px;top:596px;width:9px;height:1px;border-top:1px dotted #8a8a8a;"></div>
<div style="left:510px;top:605px;width:1px;height:14px;border-left:1px dotted #8a8a8a;"></div>
<div style="left:511px;top:619px;width:15px;height:1px;border-top:1px dotted #8a8a8a;"></div>
<div style="left:524px;top:583.6px;width:124px;height:22.1px;background:#efefef;"></div>
<svg style="left:502px;top:587px" width="18" height="18" viewBox="0 0 18 18">
<rect x="4.5" y="4.5" width="9" height="9" fill="#f8e860" stroke="#b8a020" stroke-width="0.8"/><rect x="4.5" y="4.5" width="4.5" height="4.5" fill="#fffbd0"/>
<circle cx="9" cy="2.2" r="2" fill="#14861a"/><circle cx="9" cy="15.8" r="2" fill="#14861a"/><circle cx="2.2" cy="9" r="2" fill="#14861a"/><circle cx="15.8" cy="9" r="2" fill="#14861a"/></svg>
<div class="t" style="left:528px;top:585.48px;font-size:15px;line-height:17.25px;font-weight:normal;color:#1e1e1e;">Плита ФЛ10.12-2</div>
<svg style="left:526px;top:610.5px" width="18" height="18" viewBox="0 0 18 18">
<rect x="4.5" y="4.5" width="9" height="9" fill="#f8e860" stroke="#b8a020" stroke-width="0.8"/><rect x="4.5" y="4.5" width="4.5" height="4.5" fill="#fffbd0"/>
<circle cx="9" cy="2.2" r="2" fill="#14861a"/><circle cx="9" cy="15.8" r="2" fill="#14861a"/><circle cx="2.2" cy="9" r="2" fill="#14861a"/><circle cx="15.8" cy="9" r="2" fill="#14861a"/></svg>
<div class="t" style="left:552px;top:608.68px;font-size:15px;line-height:17.25px;font-weight:normal;color:#1e1e1e;">Подготовка</div>
<div style="left:808px;top:583px;width:32.5px;height:453px;background:#efefef;"></div>
<div style="left:840.5px;top:583px;width:4.5px;height:453px;background:#f8f8f8;"></div>
<div style="left:845px;top:583px;width:1.3px;height:453px;background:#a3a3a3;"></div>
<svg style="left:808px;top:583px" width="33" height="200" viewBox="808 583 33 200">
<path d="M812.5 589.5v9.5h4.5M817 593.5h13.5v12h-13.5z" fill="none" stroke="#222" stroke-width="1.2" stroke-dasharray="1.6 1.4"/>
<path d="M824 591l1.5 3.5 3.5 1-3.5 1.5-1.5 3.5-1.5-3.5-3.5-1.5 3.5-1z" fill="#e8e840"/>
<path d="M812 622L818.5 615.5L821 617L823 616.5L832.5 626L832 628.5L833 630.5L826 636.5L824 635L822 635.5L812.5 625.5L813 623.5z" fill="#929292"/>
<path d="M810 644.5h26M810 739.6h26" stroke="#b0b0b0" stroke-width="1.2"/>
<path d="M817 656l3 7-4 10h14l-4-10 3-7h-3l-3 5-3-5z" fill="#9a9a9a"/>
<path d="M812.5 684.5h9v12h-9z" fill="#fff" stroke="#111" stroke-width="1.5"/><path d="M814 688h6M814 691h6" stroke="#111"/>
<path d="M819.5 689.5h7l3 3v7.5h-10z" fill="#fff" stroke="#1a1a80" stroke-width="1.5"/><path d="M821.5 694h6M821.5 697h6" stroke="#1a1a80"/>
<path d="M812.5 715.5h14v14h-14z" fill="#e8c030" stroke="#6a5010" stroke-width="1"/><rect x="816" y="712.5" width="7" height="4" fill="#ddd" stroke="#555" stroke-width="0.8"/>
<path d="M819.5 721.5h10v9h-10z" fill="#e4e4e4" stroke="#555" stroke-width="1"/><path d="M821 725h7M821 728h7" stroke="#6a8ac8"/>
<path d="M814 751l13 14M827 751l-13 14" stroke="#9a9a9a" stroke-width="2.2"/>
</svg>
<div style="left:846.3px;top:583px;width:26px;height:453px;background:#f0f0f0;"></div>
<div style="left:872px;top:583px;width:1.3px;height:453px;background:#d6d6d6;"></div>
<svg style="left:853px;top:587.8px" width="14" height="14" viewBox="0 0 14 14"><rect x="1.5" y="1.5" width="11" height="11" fill="#fff" stroke="#1c1c1c" stroke-width="1.6"/><path d="M4 7h6" stroke="#1c1c1c" stroke-width="1.6"/></svg>
<div class="t" style="left:875px;top:586.16px;font-size:16px;line-height:18.40px;font-weight:bold;color:#000;letter-spacing:1.4px;transform:scaleX(0.85);transform-origin:0 0;">Изделие</div>
<div style="left:873px;top:607.376px;width:440px;height:1px;background:#d2d2d2;"></div>
<div style="left:1044px;top:608.376px;width:1.3px;height:23.576px;background:#d2d2d2;"></div>
<div class="t" style="left:875.5px;top:612.45px;font-size:16.2px;line-height:18.63px;font-weight:normal;color:#262626;transform:scaleX(0.865);transform-origin:0 0;">Код ОКП</div>
<div style="left:873px;top:631.952px;width:440px;height:1px;background:#d2d2d2;"></div>
<div style="left:1044px;top:632.952px;width:1.3px;height:23.576px;background:#d2d2d2;"></div>
<div class="t" style="left:875.5px;top:637.02px;font-size:16.2px;line-height:18.63px;font-weight:normal;color:#262626;transform:scaleX(0.865);transform-origin:0 0;">Идентификатор</div>
<div class="t" style="left:1047px;top:637.02px;font-size:16.2px;line-height:18.63px;font-weight:normal;color:#262626;transform:scaleX(0.865);transform-origin:0 0;">ОП-001</div>
<div style="left:873px;top:656.528px;width:440px;height:1px;background:#d2d2d2;"></div>
<div style="left:1044px;top:657.528px;width:1.3px;height:23.576px;background:#d2d2d2;"></div>
<div class="t" style="left:875.5px;top:661.60px;font-size:16.2px;line-height:18.63px;font-weight:normal;color:#262626;transform:scaleX(0.865);transform-origin:0 0;">Наименование</div>
<div class="t" style="left:1047px;top:661.60px;font-size:16.2px;line-height:18.63px;font-weight:normal;color:#262626;transform:scaleX(0.865);transform-origin:0 0;">ФЛ10.12-2</div>
<div style="left:873px;top:681.1039999999999px;width:440px;height:1px;background:#d2d2d2;"></div>
<div style="left:1044px;top:682.1039999999999px;width:1.3px;height:23.576px;background:#d2d2d2;"></div>
<div class="t" style="left:875.5px;top:686.18px;font-size:16.2px;line-height:18.63px;font-weight:normal;color:#262626;transform:scaleX(0.865);transform-origin:0 0;">Обозначение (модель)</div>
<div style="left:873px;top:705.68px;width:440px;height:1px;background:#d2d2d2;"></div>
<div style="left:1044px;top:706.68px;width:1.3px;height:23.576px;background:#d2d2d2;"></div>
<div class="t" style="left:875.5px;top:710.75px;font-size:16.2px;line-height:18.63px;font-weight:normal;color:#262626;transform:scaleX(0.865);transform-origin:0 0;">Нормативный документ</div>
<div class="t" style="left:1047px;top:710.75px;font-size:16.2px;line-height:18.63px;font-weight:normal;color:#262626;transform:scaleX(0.865);transform-origin:0 0;">ГОСТ 13580-21</div>
<div style="left:873px;top:730.256px;width:440px;height:1px;background:#d2d2d2;"></div>
<div style="left:1044px;top:731.256px;width:1.3px;height:23.576px;background:#d2d2d2;"></div>
<div class="t" style="left:875.5px;top:735.33px;font-size:16.2px;line-height:18.63px;font-weight:normal;color:#262626;transform:scaleX(0.865);transform-origin:0 0;">Статус изделия</div>
<div class="t" style="left:1047px;top:735.33px;font-size:16.2px;line-height:18.63px;font-weight:normal;color:#262626;transform:scaleX(0.865);transform-origin:0 0;">Проектируемое</div>
<div style="left:873px;top:754.832px;width:440px;height:1px;background:#d2d2d2;"></div>
<div style="left:1044px;top:755.832px;width:1.3px;height:23.576px;background:#d2d2d2;"></div>
<div class="t" style="left:875.5px;top:759.90px;font-size:16.2px;line-height:18.63px;font-weight:normal;color:#262626;transform:scaleX(0.865);transform-origin:0 0;">Масса</div>
<div class="t" style="left:1047px;top:759.90px;font-size:16.2px;line-height:18.63px;font-weight:normal;color:#262626;transform:scaleX(0.865);transform-origin:0 0;">0.65</div>
<div style="left:873px;top:779.4079999999999px;width:440px;height:1px;background:#d2d2d2;"></div>
<div style="left:1044px;top:780.4079999999999px;width:1.3px;height:23.576px;background:#d2d2d2;"></div>
<div class="t" style="left:875.5px;top:784.48px;font-size:16.2px;line-height:18.63px;font-weight:normal;color:#262626;transform:scaleX(0.865);transform-origin:0 0;">Ссылочный чертеж</div>
<div class="t" style="left:1047px;top:784.48px;font-size:16.2px;line-height:18.63px;font-weight:normal;color:#262626;transform:scaleX(0.865);transform-origin:0 0;">см. л. 5</div>
<svg style="left:853px;top:809.0px" width="14" height="14" viewBox="0 0 14 14"><rect x="1.5" y="1.5" width="11" height="11" fill="#fff" stroke="#1c1c1c" stroke-width="1.6"/><path d="M4 7h6" stroke="#1c1c1c" stroke-width="1.6"/></svg>
<div class="t" style="left:875px;top:807.34px;font-size:16px;line-height:18.40px;font-weight:bold;color:#000;letter-spacing:1.4px;transform:scaleX(0.85);transform-origin:0 0;">Спецификация</div>
<div style="left:873px;top:828.56px;width:440px;height:1px;background:#d2d2d2;"></div>
<div style="left:1044px;top:829.56px;width:1.3px;height:23.576px;background:#d2d2d2;"></div>
<div class="t" style="left:875.5px;top:833.63px;font-size:16.2px;line-height:18.63px;font-weight:normal;color:#262626;transform:scaleX(0.865);transform-origin:0 0;">Позиция по специфика...</div>
<div class="t" style="left:1047px;top:833.63px;font-size:16.2px;line-height:18.63px;font-weight:normal;color:#262626;transform:scaleX(0.865);transform-origin:0 0;">6</div>
<div style="left:873px;top:853.136px;width:440px;height:1px;background:#d2d2d2;"></div>
<div style="left:1044px;top:854.136px;width:1.3px;height:23.576px;background:#d2d2d2;"></div>
<div class="t" style="left:875.5px;top:858.21px;font-size:16.2px;line-height:18.63px;font-weight:normal;color:#262626;transform:scaleX(0.865);transform-origin:0 0;">Группа по спецификации</div>
<div class="t" style="left:1047px;top:858.21px;font-size:16.2px;line-height:18.63px;font-weight:normal;color:#262626;transform:scaleX(0.865);transform-origin:0 0;">Объект параметрический</div>
<div style="left:873px;top:877.712px;width:440px;height:1px;background:#d2d2d2;"></div>
<div style="left:1044px;top:878.712px;width:1.3px;height:23.576px;background:#d2d2d2;"></div>
<div class="t" style="left:875.5px;top:882.78px;font-size:16.2px;line-height:18.63px;font-weight:normal;color:#262626;transform:scaleX(0.865);transform-origin:0 0;">Количество единиц</div>
<div style="left:873px;top:902.288px;width:440px;height:1px;background:#d2d2d2;"></div>
<div style="left:1044px;top:903.288px;width:1.3px;height:23.576px;background:#d2d2d2;"></div>
<div class="t" style="left:875.5px;top:907.36px;font-size:16.2px;line-height:18.63px;font-weight:normal;color:#262626;transform:scaleX(0.865);transform-origin:0 0;">Включить в специфика...</div>
<div class="t" style="left:1047px;top:907.36px;font-size:16.2px;line-height:18.63px;font-weight:normal;color:#262626;transform:scaleX(0.865);transform-origin:0 0;">1</div>
<div style="left:873px;top:926.864px;width:440px;height:1px;background:#d2d2d2;"></div>
<div style="left:1044px;top:927.864px;width:1.3px;height:23.576px;background:#d2d2d2;"></div>
<div class="t" style="left:875.5px;top:931.94px;font-size:16.2px;line-height:18.63px;font-weight:normal;color:#262626;transform:scaleX(0.865);transform-origin:0 0;">Примечания</div>
<div class="t" style="left:1047px;top:931.94px;font-size:16.2px;line-height:18.63px;font-weight:normal;color:#262626;transform:scaleX(0.865);transform-origin:0 0;">т</div>
<svg style="left:853px;top:956.4px" width="14" height="14" viewBox="0 0 14 14"><rect x="1.5" y="1.5" width="11" height="11" fill="#fff" stroke="#1c1c1c" stroke-width="1.6"/><path d="M4 7h6" stroke="#1c1c1c" stroke-width="1.6"/></svg>
<div class="t" style="left:875px;top:954.80px;font-size:16px;line-height:18.40px;font-weight:bold;color:#000;letter-spacing:1.4px;transform:scaleX(0.85);transform-origin:0 0;">Размеры</div>
<div style="left:873px;top:976.016px;width:440px;height:1px;background:#d2d2d2;"></div>
<div style="left:1044px;top:977.016px;width:1.3px;height:23.576px;background:#d2d2d2;"></div>
<div class="t" style="left:875.5px;top:981.09px;font-size:16.2px;line-height:18.63px;font-weight:normal;color:#262626;transform:scaleX(0.865);transform-origin:0 0;">Длина</div>
<div class="t" style="left:1047px;top:981.09px;font-size:16.2px;line-height:18.63px;font-weight:normal;color:#262626;transform:scaleX(0.865);transform-origin:0 0;">1180</div>
<div style="left:873px;top:1000.592px;width:440px;height:1px;background:#d2d2d2;"></div>
<div style="left:1044px;top:1001.592px;width:1.3px;height:23.576px;background:#d2d2d2;"></div>
<div class="t" style="left:875.5px;top:1005.66px;font-size:16.2px;line-height:18.63px;font-weight:normal;color:#262626;transform:scaleX(0.865);transform-origin:0 0;">Высота</div>
<div class="t" style="left:1047px;top:1005.66px;font-size:16.2px;line-height:18.63px;font-weight:normal;color:#262626;transform:scaleX(0.865);transform-origin:0 0;">300</div>
<div style="left:873px;top:1025.168px;width:440px;height:1px;background:#d2d2d2;"></div>
<div style="left:1044px;top:1026.168px;width:1.3px;height:23.576px;background:#d2d2d2;"></div>
<div class="t" style="left:875.5px;top:1030.24px;font-size:16.2px;line-height:18.63px;font-weight:normal;color:#262626;transform:scaleX(0.865);transform-origin:0 0;">Ширина</div>
<div class="t" style="left:1047px;top:1030.24px;font-size:16.2px;line-height:18.63px;font-weight:normal;color:#262626;transform:scaleX(0.865);transform-origin:0 0;">1000</div>
<div style="left:420px;top:1036px;width:956px;height:8px;background:#fff;"></div>
<div style="left:1312.5px;top:583px;width:30.5px;height:453px;background:#ececec;"></div>
<div style="left:1343px;top:579px;width:5px;height:457px;background:#ffffff;"></div>
<div style="left:1312.6px;top:583px;width:30px;height:26.5px;background:#cce4f7;border:1px solid #99c9ef;"></div>
<div style="left:1312.6px;top:668px;width:30px;height:26.5px;background:#cce4f7;border:1px solid #99c9ef;"></div>
<svg style="left:1312px;top:583px" width="32" height="453" viewBox="1312 583 32 453">
<rect x="1316.5" y="587.5" width="6" height="6" fill="#fff" stroke="#222"/><path d="M1317.5 590.5h4M1319.5 588.5v4" stroke="#111"/>
<rect x="1316.5" y="598.5" width="6" height="6" fill="#fff" stroke="#222"/><path d="M1317.5 601.5h4M1319.5 599.5v4" stroke="#111"/>
<path d="M1325 589h5M1325 593h9M1325 597h9M1325 600h9M1325 604h5" stroke="#7a8aa0" stroke-width="1" stroke-dasharray="2 1"/>
<text x="1322" y="624" font-family="Liberation Serif" font-weight="bold" font-size="10" text-anchor="middle" fill="#2a4ab0">A</text>
<text x="1322" y="635" font-family="Liberation Serif" font-weight="bold" font-size="10" text-anchor="middle" fill="#b02a3a">Z</text>
<path d="M1333 615v18M1330 629l3 5 3-5" stroke="#111" stroke-width="1.5" fill="none"/>
<rect x="1317.5" y="643.5" width="5" height="5" fill="#fff" stroke="#333"/><circle cx="1320" cy="646" r="1.2" fill="#111"/>
<rect x="1328.5" y="656.5" width="5" height="5" fill="#fff" stroke="#333"/><path d="M1329.5 659h3" stroke="#111"/>
<path d="M1316 662l18-18" stroke="#777" stroke-width="1"/>
<rect x="1318.5" y="680.5" width="18" height="9" fill="#e0ecf8" stroke="#4a70b0"/><path d="M1321 684h4M1321 687h4M1328 684h6M1328 687h6" stroke="#2050b0"/>
<path d="M1326 688l6-13 3 1.5-6 13z" fill="#f0c020" stroke="#222" stroke-width="0.8"/><circle cx="1334" cy="675" r="1.8" fill="#e02020"/>
<path d="M1316 701h26M1316 768h26M1316 892h26M1316 987.4h26" stroke="#b4b4b4" stroke-width="1.2"/>
<path d="M1317 713l2 2 3-4M1317 720l2 2 3-4M1317 727l2 2 3-4" stroke="#6a8a6a" fill="none"/><path d="M1323 721h13M1323 728h13" stroke="#888" stroke-width="2"/>
<path d="M1327 711l8 8M1335 711l-8 8" stroke="#1a8a1a" stroke-width="2.2"/>
<rect x="1316.5" y="739.5" width="20" height="20" fill="#f4f4f4" stroke="#777"/><path d="M1319 744l2 2 3-4M1319 750l2 2 3-4M1319 756l2 2 3-4" stroke="#555" fill="none"/><path d="M1326 745h8M1326 751h8M1326 757h8" stroke="#555" stroke-width="2"/>
<path d="M1316 779h6M1319 776v6" stroke="#222" stroke-width="2"/><path d="M1316 779h6M1319 776v6" stroke="#e8e840" stroke-width="1"/>
<path d="M1325 784v11h4M1325 789h3" stroke="#222" stroke-width="1.3" fill="none"/><path d="M1330 787l2 4 2-4M1330 792l2 4 2-4" stroke="#2a3ae0" fill="none"/>
<rect x="1318.5" y="811.5" width="16" height="12" fill="#f8e8a0" stroke="#6a6030"/><path d="M1322 820l10-10 2 2-10 10-3 1z" fill="#e8b020" stroke="#333" stroke-width="0.8"/><circle cx="1334" cy="809" r="1.6" fill="#e06060"/>
<path d="M1316 835l5 5M1321 835l-5 5" stroke="#e02020" stroke-width="1.8"/><rect x="1318.5" y="842.5" width="8" height="5" fill="#e8f0fa" stroke="#888"/><rect x="1328.5" y="842.5" width="8" height="5" fill="#e8f0fa" stroke="#888"/><path d="M1320 845h5M1330 845h5" stroke="#2a50c0"/>
<path d="M1322 873v-3q0-4 4-4q4 0 4 4v3" stroke="#777" stroke-width="1.5" fill="none"/><rect x="1319.5" y="873" width="13" height="9.5" fill="#f0b820" stroke="#9a7010"/><rect x="1325" y="876" width="2" height="3" fill="#222"/>
<rect x="1318.5" y="913.5" width="8" height="6" fill="#e8f0fa" stroke="#888"/><rect x="1328.5" y="913.5" width="8" height="6" fill="#e8f0fa" stroke="#888"/><path d="M1320 916.5h5M1330 916.5h5" stroke="#2a50c0"/>
<path d="M1318 912q5-8 12-7l6 3v4z" fill="#e8c050" stroke="#6a5010" stroke-width="0.8"/><path d="M1335 905v5" stroke="#2a9a2a" stroke-width="2"/>
<path d="M1320 930v8M1316 934h8M1317 931l6 6M1323 931l-6 6" stroke="#e8e040" stroke-width="1.3"/><path d="M1320 934v8" stroke="#222"/>
<rect x="1320.5" y="940.5" width="7" height="6" fill="#e8f0fa" stroke="#888"/><rect x="1328.5" y="940.5" width="8" height="6" fill="#e8f0fa" stroke="#888"/><path d="M1322 943.5h4M1330 943.5h5" stroke="#2a50c0"/>
<rect x="1315" y="957" width="8" height="7" fill="#f0f080" opacity="0.9"/>
<rect x="1318.5" y="960.5" width="18" height="16" fill="#e8f0fa" stroke="#999"/><path d="M1327.5 960.5v16M1318.5 965.5h18M1318.5 971h18" stroke="#999"/><path d="M1321 968h4M1330 963h5M1330 968h5M1321 974h4M1330 974h5" stroke="#2a70d0" stroke-width="1.3"/>
<path d="M1316.5 1000.5h11M1316.5 1004h9M1316.5 1007.5h4M1316.5 1000.5v16h18v-6" fill="none" stroke="#111" stroke-width="1.5"/><path d="M1319 1012l9-11q3-3 6 0l1 1-9 11z" fill="#dedede" stroke="#111" stroke-width="1.5"/>
<path d="M1317 1027l9 9M1326 1027l-9 9" stroke="#e02020" stroke-width="2"/><path d="M1324 1029h10v9" stroke="#222" stroke-width="1.3" fill="none"/>
</svg>
<div style="left:1348px;top:579px;width:16.5px;height:457px;background:#f0f0f0;"></div>
<div style="left:1364.5px;top:498px;width:1.5px;height:538px;background:#8a8a8a;"></div>
<div style="left:1366px;top:1003.5px;width:10px;height:28px;background:#c6c6c6;"></div>
<div style="left:1366px;top:1031.5px;width:10px;height:4.5px;background:#d8d8d8;"></div>
<div style="left:0px;top:1036px;width:1376px;height:8px;background:#ffffff;"></div>
<div style="left:0px;top:1036px;width:420px;height:8px;background:#ebebeb;"></div>
<div style="left:2.5px;top:1036px;width:1.5px;height:8px;background:#777;"></div>
<div style="left:6px;top:1036px;width:1px;height:8px;background:#aaa;"></div>
<div style="left:416px;top:1036px;width:1.2px;height:8px;background:#999;"></div>
<div style="left:419.2px;top:1036px;width:1.2px;height:8px;background:#999;"></div>
<div style="left:425px;top:1036px;width:1.2px;height:8px;background:#888;"></div>
<div style="left:540px;top:1036px;width:21px;height:8px;background:linear-gradient(90deg,#fff,#dedede);"></div>
<div style="left:560.5px;top:1036px;width:1.3px;height:8px;background:#666;"></div>
<div style="left:562px;top:1036px;width:16px;height:8px;background:#ebebeb;"></div>
<div style="left:920px;top:1036px;width:32px;height:8px;background:#e6e6e6;"></div>
<div style="left:957.5px;top:1036px;width:1.3px;height:8px;background:#777;"></div>
<div style="left:959px;top:1036px;width:26px;height:8px;background:#ececec;"></div>
<div style="left:985px;top:1036.3px;width:172px;height:8px;border-top:1px solid #b0b0b0;border-left:1px solid #c8c8c8;"></div>
<div style="left:1157px;top:1036.3px;width:219px;height:8px;border-top:1px solid #b0b0b0;border-left:1px solid #c8c8c8;"></div>
</body></html>
